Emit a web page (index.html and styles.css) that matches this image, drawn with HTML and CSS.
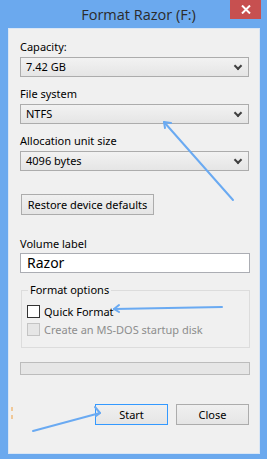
FILE: index.html
```html
<!DOCTYPE html>
<html lang="en">
<head>
    <title>Format Razor (F:)</title>
    <link rel="stylesheet" href="styles.css">
</head>
<body>
    <div class="window">
        <div class="titlebar">
            <span class="title">Format Razor (F:)</span>
            <button class="close" aria-label="Close">
                <svg width="10" height="9" viewBox="0 0 10 9">
                    <path d="M1 0.5 L9 8.5 M9 0.5 L1 8.5" stroke="#fff" stroke-width="2"/>
                </svg>
            </button>
        </div>

        <div class="client">
            <label class="field-label">Capacity:</label>
            <div class="combo">7.42 GB<span class="chev"></span></div>

            <label class="field-label gap">File system</label>
            <div class="combo">NTFS<span class="chev"></span></div>

            <label class="field-label gap">Allocation unit size</label>
            <div class="combo">4096 bytes<span class="chev"></span></div>

            <button class="btn restore">Restore device defaults</button>

            <label class="field-label vol">Volume label</label>
            <div class="textbox">Razor</div>

            <fieldset class="group">
                <legend>Format options</legend>
                <div class="check-row">
                    <span class="check"></span>Quick Format
                </div>
                <div class="check-row disabled">
                    <span class="check"></span>Create an MS-DOS startup disk
                </div>
            </fieldset>

            <div class="progress"></div>

            <div class="actions">
                <button class="btn action default">Start</button>
                <button class="btn action">Close</button>
            </div>
        </div>

        <!-- blue annotation arrows drawn over the dialog -->
        <svg class="marks" width="267" height="459" viewBox="0 0 267 459">
            <g stroke="#6aaaf2" stroke-width="2" fill="none" stroke-linecap="round">
                <path d="M233 200 L164 122"/>
                <path d="M164 122 L171 123 M164 122 L165 128"/>
                <path d="M222 307 L114 309"/>
                <path d="M114 309 L119 305 M114 309 L119 312"/>
                <path d="M33 431 L100 413"/>
                <path d="M100 413 L95 407 M100 413 L96 416"/>
            </g>
            <path d="M12 407 V411 M12 415 V419" stroke="#f0a040" stroke-width="1"/>
        </svg>
    </div>
</body>
</html>
```

FILE: styles.css
```css
body {
    margin: 0;
    background-color: #6ba9ee;
    font-family: "Noto Sans", sans-serif;
    font-size: 11px;
    color: #000;
}

.window {
    position: relative;
    width: 267px;
    height: 459px;
    overflow: hidden;
}

.titlebar {
    height: 28px;
    display: flex;
    justify-content: center;
    align-items: center;
}

.title {
    font-family: "Open Sans", sans-serif;
    font-size: 14.5px;
    color: #2b2b2b;
    margin-left: 10px;
}

.close {
    position: absolute;
    top: 0;
    right: 6px;
    width: 31px;
    height: 19px;
    border: none;
    padding: 0;
    background-color: #c75050;
    display: flex;
    align-items: center;
    justify-content: center;
}

.client {
    margin: 0 7px 0 8px;
    height: 426px;
    border: 1px solid #d9e6f5;
    background-color: #f0f0f0;
    padding: 10px 8px 0 11px;
    box-sizing: border-box;
}

.field-label {
    display: block;
    line-height: 16px;
    height: 16px;
}

.field-label.gap {
    margin-top: 9px;
}

.combo {
    position: relative;
    height: 20px;
    width: 229px;
    margin-top: 2px;
    box-sizing: border-box;
    border: 1px solid #acacac;
    background: linear-gradient(#f2f2f2, #e5e5e5);
    padding-left: 5px;
    line-height: 18px;
}

.chev {
    position: absolute;
    right: 7px;
    top: 5px;
    width: 4px;
    height: 4px;
    border-right: 2px solid #404040;
    border-bottom: 2px solid #404040;
    transform: rotate(45deg);
}

.btn {
    font-family: "Noto Sans", sans-serif;
    font-size: 11px;
    border: 1px solid #acacac;
    background: linear-gradient(#f0f0f0, #e5e5e5);
    color: #000;
    padding: 0;
    box-sizing: border-box;
    height: 21px;
}

.restore {
    display: block;
    margin: 23px 0 0 1px;
    width: 133px;
}

.field-label.vol {
    margin-top: 21px;
}

.textbox {
    height: 20px;
    width: 230px;
    margin-top: 1px;
    box-sizing: border-box;
    border: 1px solid #abadb3;
    background-color: #fff;
    font-size: 14px;
    line-height: 18px;
    padding-left: 6px;
}

.group {
    margin: 10px 0 0 1px;
    width: 229px;
    height: 65px;
    box-sizing: border-box;
    border: 1px solid #dcdcdc;
    padding: 5px 0 0 5px;
}

.group legend {
    padding: 0 2px;
    margin-left: 1px;
    line-height: 14px;
}

.check-row {
    display: flex;
    align-items: center;
    gap: 4px;
    height: 18px;
}

.check {
    width: 13px;
    height: 13px;
    box-sizing: border-box;
    border: 1px solid #333;
    background-color: #fff;
}

.check-row.disabled {
    color: #8d8d8d;
}

.check-row.disabled .check {
    border-color: #c4c4c4;
    background-color: #e6e6e6;
}

.progress {
    margin-top: 14px;
    width: 230px;
    height: 13px;
    box-sizing: border-box;
    border: 1px solid #bcbcbc;
    background-color: #e6e6e6;
}

.actions {
    display: flex;
    justify-content: flex-end;
    gap: 8px;
    margin-top: 29px;
    padding-right: 2px;
}

.action {
    width: 73px;
}

.action.default {
    border-color: #3399ff;
}

.marks {
    position: absolute;
    left: 0;
    top: 0;
    pointer-events: none;
}
```
